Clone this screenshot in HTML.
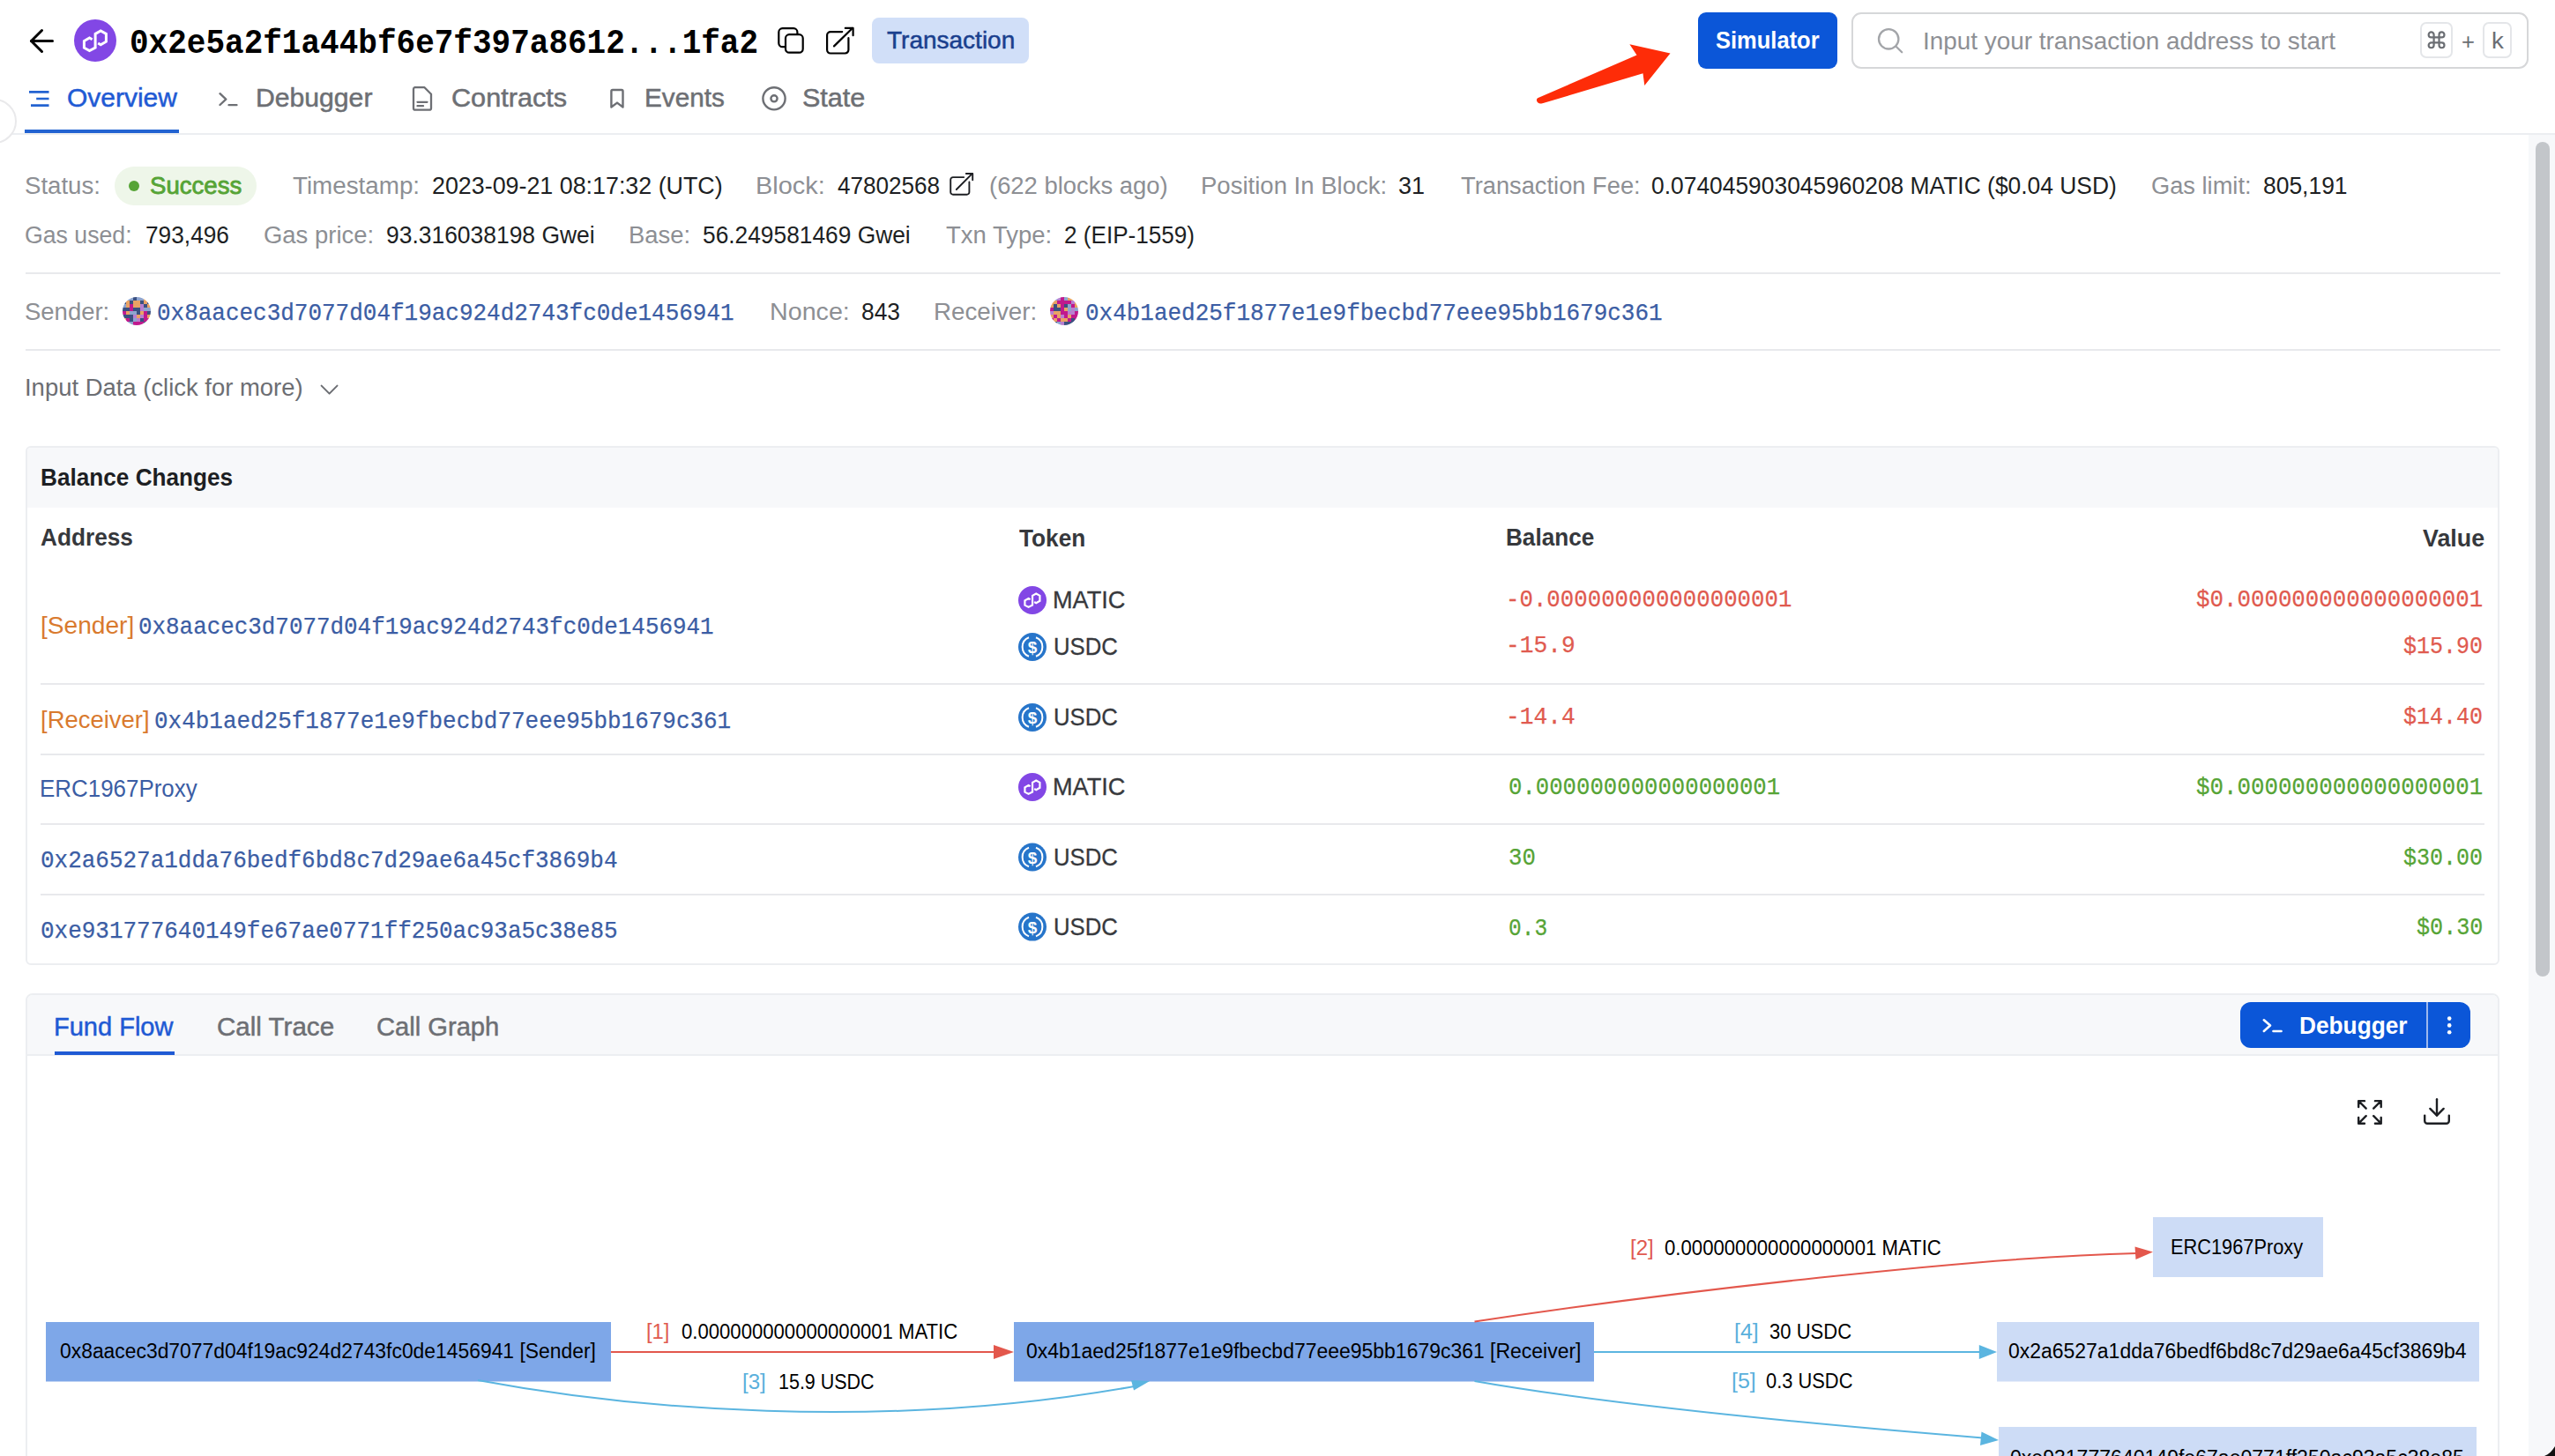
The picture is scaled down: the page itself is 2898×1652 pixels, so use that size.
<!DOCTYPE html>
<html><head><meta charset="utf-8"><title>Transaction</title>
<style>
html,body{margin:0;padding:0}
body{width:2898px;height:1652px;overflow:hidden;position:relative;background:#fff;font-family:"Liberation Sans",sans-serif}
.a{position:absolute;box-sizing:border-box}
.t{position:absolute;line-height:1;white-space:pre;transform-origin:0 0}
.dv{position:absolute;height:2px;background:#e8e9ec}
.av{position:absolute;width:32px;height:32px;border-radius:50%;overflow:hidden;display:grid;grid-template-columns:repeat(8,4px);grid-template-rows:repeat(8,4px)}
.av i{display:block;width:4px;height:4px}
.N{background:#3b5081}.L{background:#8ea4cf}.O{background:#e9a264}.M{background:#c0198d}.P{background:#b97fd0}
</style></head><body>
<!-- header divider -->
<div class="a" style="left:0;top:151px;width:2898px;height:2px;background:#eceef1"></div>
<!-- left floating circle -->
<div class="a" style="left:-32px;top:112px;width:51px;height:51px;border:2px solid #e9e9eb;border-radius:50%;background:#fff"></div>
<!-- tab underline -->
<div class="a" style="left:28px;top:147px;width:175px;height:4px;background:#2363d1"></div>
<!-- transaction badge -->
<div class="a" style="left:989px;top:20px;width:178px;height:52px;background:#d1dff8;border-radius:8px"></div>
<!-- simulator button -->
<div class="a" style="left:1926px;top:14px;width:158px;height:64px;background:#0b56d8;border-radius:9px"></div>
<!-- search box -->
<div class="a" style="left:2100px;top:14px;width:768px;height:64px;border:2px solid #d6d7d9;border-radius:11px;background:#fff"></div>
<div class="a" style="left:2745px;top:25px;width:37px;height:41px;border:2px solid #e4e6e9;border-radius:7px"></div>
<div class="a" style="left:2816px;top:25px;width:33px;height:41px;border:2px solid #e4e6e9;border-radius:7px"></div>
<!-- scrollbar -->
<div class="a" style="left:2868px;top:153px;width:30px;height:1499px;background:#f7f8fa"></div>
<div class="a" style="left:2876px;top:161px;width:16px;height:947px;background:#c3c6ca;border-radius:8px"></div>
<!-- success pill -->
<div class="a" style="left:130px;top:189px;width:161px;height:44px;background:#eef6e9;border-radius:22px"></div>
<div class="a" style="left:146px;top:205px;width:12px;height:12px;background:#56a436;border-radius:50%"></div>
<!-- dividers -->
<div class="dv" style="left:29px;top:309px;width:2807px"></div>
<div class="dv" style="left:29px;top:396px;width:2807px"></div>
<!-- avatars -->
<div class="av" style="left:139px;top:337px">
<i class="L"></i><i class="L"></i><i class="L"></i><i class="N"></i><i class="L"></i><i class="L"></i><i class="O"></i><i class="O"></i>
<i class="N"></i><i class="O"></i><i class="N"></i><i class="O"></i><i class="O"></i><i class="N"></i><i class="O"></i><i class="N"></i>
<i class="L"></i><i class="O"></i><i class="M"></i><i class="O"></i><i class="O"></i><i class="P"></i><i class="N"></i><i class="O"></i>
<i class="N"></i><i class="N"></i><i class="M"></i><i class="N"></i><i class="N"></i><i class="P"></i><i class="L"></i><i class="L"></i>
<i class="M"></i><i class="O"></i><i class="L"></i><i class="L"></i><i class="N"></i><i class="O"></i><i class="M"></i><i class="N"></i>
<i class="N"></i><i class="N"></i><i class="N"></i><i class="P"></i><i class="O"></i><i class="P"></i><i class="M"></i><i class="O"></i>
<i class="O"></i><i class="M"></i><i class="N"></i><i class="L"></i><i class="P"></i><i class="N"></i><i class="M"></i><i class="M"></i>
<i class="L"></i><i class="L"></i><i class="L"></i><i class="M"></i><i class="M"></i><i class="M"></i><i class="N"></i><i class="L"></i>
</div>
<div class="av" style="left:1191px;top:337px">
<i class="O"></i><i class="L"></i><i class="P"></i><i class="M"></i><i class="L"></i><i class="O"></i><i class="O"></i><i class="O"></i>
<i class="O"></i><i class="O"></i><i class="M"></i><i class="M"></i><i class="M"></i><i class="M"></i><i class="P"></i><i class="O"></i>
<i class="O"></i><i class="N"></i><i class="O"></i><i class="M"></i><i class="N"></i><i class="L"></i><i class="M"></i><i class="O"></i>
<i class="M"></i><i class="N"></i><i class="N"></i><i class="M"></i><i class="O"></i><i class="L"></i><i class="P"></i><i class="L"></i>
<i class="P"></i><i class="O"></i><i class="O"></i><i class="M"></i><i class="M"></i><i class="P"></i><i class="P"></i><i class="M"></i>
<i class="O"></i><i class="M"></i><i class="O"></i><i class="P"></i><i class="M"></i><i class="O"></i><i class="M"></i><i class="M"></i>
<i class="M"></i><i class="O"></i><i class="M"></i><i class="O"></i><i class="O"></i><i class="M"></i><i class="N"></i><i class="M"></i>
<i class="N"></i><i class="N"></i><i class="L"></i><i class="P"></i><i class="N"></i><i class="N"></i><i class="N"></i><i class="N"></i>
</div>
<!-- balance card -->
<div class="a" style="left:29px;top:506px;width:2806px;height:589px;border:2px solid #eceef1;border-radius:6px;overflow:hidden;background:#fff">
  <div class="a" style="left:0;top:0;width:100%;height:68px;background:#f7f8fa"></div>
</div>
<div class="dv" style="left:46px;top:775px;width:2772px"></div>
<div class="dv" style="left:46px;top:855px;width:2772px"></div>
<div class="dv" style="left:46px;top:934px;width:2772px"></div>
<div class="dv" style="left:46px;top:1014px;width:2772px"></div>
<!-- fund flow card -->
<div class="a" style="left:29px;top:1127px;width:2806px;height:700px;border:2px solid #eceef1;border-radius:8px;overflow:hidden;background:#fff">
  <div class="a" style="left:0;top:0;width:100%;height:69px;background:#f7f8fa;border-bottom:2px solid #eceef1"></div>
</div>
<div class="a" style="left:62px;top:1193px;width:136px;height:4px;background:#1f5ad4"></div>
<!-- debugger button -->
<div class="a" style="left:2541px;top:1137px;width:261px;height:52px;background:#0b56d8;border-radius:12px"></div>
<div class="a" style="left:2752px;top:1137px;width:2px;height:52px;background:#9db8ee"></div>

<svg class="a" style="left:0;top:0" width="2898" height="1652" viewBox="0 0 2898 1652">
<g fill="none" stroke-linecap="round" stroke-linejoin="round">
<!-- back arrow -->
<g transform="translate(26.93,25.93) scale(1.714)" stroke="#000" stroke-width="1.75"><path d="m12 19-7-7 7-7"/><path d="M19 12H5"/></g>
<!-- copy -->
<g stroke="#000" stroke-width="2.2"><rect x="883.3" y="32.2" width="21.1" height="20.9" rx="4.2"/><rect x="891" y="39.2" width="19.7" height="20.5" rx="4.2" fill="#fff"/></g>
<!-- external -->
<g stroke="#000" stroke-width="2.2"><path d="M955.2 36.1H942a3.9 3.9 0 0 0-3.9 3.9V56.6a3.9 3.9 0 0 0 3.9 3.9H958.5a3.9 3.9 0 0 0 3.9-3.9V43.2"/><path d="M946 52.4L966.8 32"/><path d="M958.8 31.9H967.6V40.2"/></g>
<!-- overview list icon -->
<g stroke="#2363d1" stroke-width="2.6" stroke-linecap="butt"><path d="M33 104.4H55.5M41.2 112H55.5M35 119.6H55.5"/></g>
<!-- debugger tab icon -->
<g stroke="#6d6f74" stroke-width="2.3"><path d="M249.5 106.2L256.3 112.6L249.5 119"/><path d="M259.5 119.2H268.5"/></g>
<!-- contracts doc -->
<g stroke="#6d6f74" stroke-width="2.3"><path d="M470.5 99.2H481.5L489 106.7V122.7a2 2 0 0 1-2 2H471a2 2 0 0 1-2-2V101a2 2 0 0 1 1.5-1.8Z"/><path d="M473.5 115.8H484.5M473.5 120.2H480"/></g>
<!-- events bookmark -->
<g stroke="#6d6f74" stroke-width="2.4"><path d="M693.4 103.5a1.5 1.5 0 0 1 1.5-1.5H705a1.5 1.5 0 0 1 1.5 1.5V121.5L700 116.6L693.4 121.5Z"/></g>
<!-- state -->
<g stroke="#6d6f74" stroke-width="2.4"><circle cx="878" cy="111.8" r="12.6"/><circle cx="878" cy="111.8" r="3.6"/></g>
<!-- red annotation arrow -->
<path d="M1894.5 60.4L1848.4 50.2L1856.5 62.5L1744.1 111.2C1742 112.5 1742.5 117.5 1748.3 117.5L1750.4 117.1L1863.5 83.3L1865.3 97.1Z" fill="#fe2c08" stroke="none"/>
<!-- search icon -->
<g stroke="#a3a5a9" stroke-width="2.3"><circle cx="2142.2" cy="44.3" r="11.2"/><path d="M2150.6 52.7L2157.2 59.2"/></g>
<!-- command glyph -->
<g transform="translate(2751.7,33.5) scale(0.989)" stroke="#6b6e73" stroke-width="2.22"><path d="M15 6v12a3 3 0 1 0 3-3H6a3 3 0 1 0 3 3V6a3 3 0 1 0-3 3h12a3 3 0 1 0-3-3"/></g>
<!-- chevron -->
<path d="M364.6 437.6L373.6 446.6L382.5 437.6" stroke="#6c6e73" stroke-width="2"/>
<!-- block external -->
<g stroke="#1d1f23" stroke-width="1.9"><path d="M1093.2 201.1H1081a2.8 2.8 0 0 0-2.8 2.8V217.9a2.8 2.8 0 0 0 2.8 2.8H1096.6a2.8 2.8 0 0 0 2.8-2.8V206.4"/><path d="M1084.8 215L1102.6 197.2"/><path d="M1095.8 197H1103.2V204.2"/></g>
<!-- expand -->
<g transform="translate(2670.9,1244.9) scale(1.42)" stroke="#1d1f23" stroke-width="1.69"><path d="m21 21-6-6m6 6v-4.8m0 4.8h-4.8"/><path d="M3 16.2V21m0 0h4.8M3 21l6-6"/><path d="M21 7.8V3m0 0h-4.8M21 3l-6 6"/><path d="M3 7.8V3m0 0h4.8M3 3l6 6"/></g>
<!-- download -->
<g transform="translate(2745.6,1242.6) scale(1.533)" stroke="#1d1f23" stroke-width="1.566"><path d="M21 15v4a2 2 0 0 1-2 2H5a2 2 0 0 1-2-2v-4"/><polyline points="7 10 12 15 17 10"/><line x1="12" x2="12" y1="15" y2="3"/></g>
<!-- debugger button icon -->
<g stroke="#fff" stroke-width="2.6"><path d="M2567.8 1157.3L2575 1163.6L2567.8 1169.9"/><path d="M2578.5 1170H2587.5"/></g>
</g>
<g fill="#fff"><circle cx="2778.2" cy="1155.6" r="2.3"/><circle cx="2778.2" cy="1163.4" r="2.3"/><circle cx="2778.2" cy="1171.2" r="2.3"/></g>
<!-- polygon logo header -->
<circle cx="108" cy="46" r="24" fill="#8247e5"/>
<polyline transform="translate(108,46)" points="-3.4,-1.3 -6.5,-3 -12.6,0.5 -12.6,8.2 -6.5,11.6 0.1,8.2 0.1,-7.6 6.2,-11.1 12.4,-7.6 12.4,1.2 6.2,4.7 3.2,3" fill="none" stroke="#fff" stroke-width="3" stroke-linejoin="miter" stroke-linecap="butt"/>
<!-- token icons -->
<g>
<circle cx="1171" cy="681" r="16" fill="#8247e5"/>
<polyline transform="translate(1171,681) scale(0.68)" points="-3.4,-1.3 -6.5,-3 -12.6,0.5 -12.6,8.2 -6.5,11.6 0.1,8.2 0.1,-7.6 6.2,-11.1 12.4,-7.6 12.4,1.2 6.2,4.7 3.2,3" fill="none" stroke="#fff" stroke-width="3.2" stroke-linejoin="miter" stroke-linecap="butt"/>
</g>
<g transform="translate(0,212)">
<circle cx="1171" cy="681" r="16" fill="#8247e5"/>
<polyline transform="translate(1171,681) scale(0.68)" points="-3.4,-1.3 -6.5,-3 -12.6,0.5 -12.6,8.2 -6.5,11.6 0.1,8.2 0.1,-7.6 6.2,-11.1 12.4,-7.6 12.4,1.2 6.2,4.7 3.2,3" fill="none" stroke="#fff" stroke-width="3.2" stroke-linejoin="miter" stroke-linecap="butt"/>
</g>
<g>
<circle cx="1171" cy="734" r="16" fill="#2775ca"/>
<path d="M1167 723.2A11.6 11.6 0 0 0 1167 744.8M1175 723.2A11.6 11.6 0 0 1 1175 744.8" stroke="#fff" stroke-width="2" fill="none"/>
<text x="1171" y="741" text-anchor="middle" font-family="Liberation Sans" font-weight="700" font-size="19" fill="#fff">$</text>
</g>
<g transform="translate(0,80)">
<circle cx="1171" cy="734" r="16" fill="#2775ca"/>
<path d="M1167 723.2A11.6 11.6 0 0 0 1167 744.8M1175 723.2A11.6 11.6 0 0 1 1175 744.8" stroke="#fff" stroke-width="2" fill="none"/>
<text x="1171" y="741" text-anchor="middle" font-family="Liberation Sans" font-weight="700" font-size="19" fill="#fff">$</text>
</g>
<g transform="translate(0,238.5)">
<circle cx="1171" cy="734" r="16" fill="#2775ca"/>
<path d="M1167 723.2A11.6 11.6 0 0 0 1167 744.8M1175 723.2A11.6 11.6 0 0 1 1175 744.8" stroke="#fff" stroke-width="2" fill="none"/>
<text x="1171" y="741" text-anchor="middle" font-family="Liberation Sans" font-weight="700" font-size="19" fill="#fff">$</text>
</g>
<g transform="translate(0,317.6)">
<circle cx="1171" cy="734" r="16" fill="#2775ca"/>
<path d="M1167 723.2A11.6 11.6 0 0 0 1167 744.8M1175 723.2A11.6 11.6 0 0 1 1175 744.8" stroke="#fff" stroke-width="2" fill="none"/>
<text x="1171" y="741" text-anchor="middle" font-family="Liberation Sans" font-weight="700" font-size="19" fill="#fff">$</text>
</g>
<!-- graph nodes -->
<rect x="52" y="1500" width="641" height="67.5" fill="#7ea7e8"/>
<rect x="1150" y="1500" width="658" height="67.5" fill="#7ea7e8"/>
<rect x="2442" y="1381" width="193" height="68" fill="#cddcf6"/>
<rect x="2265" y="1500" width="547" height="67.5" fill="#cddcf6"/>
<rect x="2267" y="1619" width="542" height="60" fill="#cddcf6"/>
<!-- edges -->
<g fill="none" stroke-width="2">
<path d="M693 1534H1128" stroke="#e3574c"/>
<path d="M1672.5 1499.6C1891.8 1466.2 2242.8 1426.1 2423 1421.9" stroke="#e3574c"/>
<path d="M542 1566C708.6 1597.3 999.2 1625.6 1292 1572" stroke="#5bb5e0"/>
<path d="M1808 1534H2246" stroke="#5bb5e0"/>
<path d="M1672.5 1567C1829.1 1594.5 2074.1 1617.4 2249 1631.5" stroke="#5bb5e0"/>
</g>
<g stroke="none">
<path d="M1127 1526L1150 1534L1127 1542Z" fill="#e3574c"/>
<path d="M2421.5 1414.5L2442 1420.4L2422.5 1429Z" fill="#e3574c"/>
<path d="M1283 1566L1304 1567L1286 1577.5Z" fill="#5bb5e0"/>
<path d="M2244.8 1526L2265 1534L2244.8 1542Z" fill="#5bb5e0"/>
<path d="M2247.5 1624.5L2267 1634L2246 1640Z" fill="#5bb5e0"/>
</g>
<!-- window corner -->
<path d="M2898 1641C2895 1646 2891 1650 2886 1652H2898Z" fill="#111"/>

</svg>
<div class="t" style="left:147.15px;top:30.60px;color:#000;font-family:'Liberation Mono', monospace;font-size:39px;font-weight:700;transform:scaleX(0.9233)">0x2e5a2f1a44bf6e7f397a8612...1fa2</div>
<div class="t" style="left:1006.00px;top:31.92px;color:#1a3f8e;font-family:'Liberation Sans', sans-serif;font-size:28px;font-weight:400;-webkit-text-stroke:0.5px currentColor;transform:scaleX(1.0000)">Transaction</div>
<div class="t" style="left:75.97px;top:96.66px;color:#1f5ad4;font-family:'Liberation Sans', sans-serif;font-size:29px;font-weight:400;-webkit-text-stroke:0.5px currentColor;transform:scaleX(1.0331)">Overview</div>
<div class="t" style="left:289.92px;top:96.66px;color:#6d6f74;font-family:'Liberation Sans', sans-serif;font-size:29px;font-weight:400;-webkit-text-stroke:0.5px currentColor;transform:scaleX(1.0397)">Debugger</div>
<div class="t" style="left:511.74px;top:96.66px;color:#6d6f74;font-family:'Liberation Sans', sans-serif;font-size:29px;font-weight:400;-webkit-text-stroke:0.5px currentColor;transform:scaleX(1.0561)">Contracts</div>
<div class="t" style="left:730.95px;top:96.66px;color:#6d6f74;font-family:'Liberation Sans', sans-serif;font-size:29px;font-weight:400;-webkit-text-stroke:0.5px currentColor;transform:scaleX(1.0233)">Events</div>
<div class="t" style="left:909.75px;top:96.66px;color:#6d6f74;font-family:'Liberation Sans', sans-serif;font-size:29px;font-weight:400;-webkit-text-stroke:0.5px currentColor;transform:scaleX(1.0530)">State</div>
<div class="t" style="left:1946.09px;top:32.02px;color:#fff;font-family:'Liberation Sans', sans-serif;font-size:28px;font-weight:700;transform:scaleX(0.9109)">Simulator</div>
<div class="t" style="left:2181.41px;top:32.52px;color:#8e9095;font-family:'Liberation Sans', sans-serif;font-size:28px;font-weight:400;transform:scaleX(0.9959)">Input your transaction address to start</div>
<div class="t" style="left:2791.82px;top:33.84px;color:#6b6e73;font-family:'Liberation Sans', sans-serif;font-size:26px;font-weight:400;transform:scaleX(0.9846)">+</div>
<div class="t" style="left:2825.73px;top:32.84px;color:#6b6e73;font-family:'Liberation Sans', sans-serif;font-size:26px;font-weight:400;transform:scaleX(1.0667)">k</div>
<div class="t" style="left:28.38px;top:197.68px;color:#8d8f94;font-family:'Liberation Sans', sans-serif;font-size:27px;font-weight:400;transform:scaleX(1.0222)">Status:</div>
<div class="t" style="left:169.98px;top:197.68px;color:#56a436;font-family:'Liberation Sans', sans-serif;font-size:27px;font-weight:400;-webkit-text-stroke:0.8px currentColor;transform:scaleX(1.0218)">Success</div>
<div class="t" style="left:332.00px;top:197.68px;color:#8d8f94;font-family:'Liberation Sans', sans-serif;font-size:27px;font-weight:400;transform:scaleX(1.0290)">Timestamp:</div>
<div class="t" style="left:490.01px;top:197.68px;color:#1d1f23;font-family:'Liberation Sans', sans-serif;font-size:27px;font-weight:400;transform:scaleX(0.9939)">2023-09-21 08:17:32 (UTC)</div>
<div class="t" style="left:856.86px;top:197.68px;color:#8d8f94;font-family:'Liberation Sans', sans-serif;font-size:27px;font-weight:400;transform:scaleX(1.0725)">Block:</div>
<div class="t" style="left:950.00px;top:197.68px;color:#1d1f23;font-family:'Liberation Sans', sans-serif;font-size:27px;font-weight:400;transform:scaleX(0.9664)">47802568</div>
<div class="t" style="left:1121.98px;top:197.68px;color:#8d8f94;font-family:'Liberation Sans', sans-serif;font-size:27px;font-weight:400;transform:scaleX(1.0152)">(622 blocks ago)</div>
<div class="t" style="left:1361.96px;top:197.68px;color:#8d8f94;font-family:'Liberation Sans', sans-serif;font-size:27px;font-weight:400;transform:scaleX(1.0197)">Position In Block:</div>
<div class="t" style="left:1586.00px;top:197.68px;color:#1d1f23;font-family:'Liberation Sans', sans-serif;font-size:27px;font-weight:400;transform:scaleX(1.0000)">31</div>
<div class="t" style="left:1657.00px;top:197.68px;color:#8d8f94;font-family:'Liberation Sans', sans-serif;font-size:27px;font-weight:400;transform:scaleX(1.0101)">Transaction Fee:</div>
<div class="t" style="left:1873.02px;top:197.68px;color:#1d1f23;font-family:'Liberation Sans', sans-serif;font-size:27px;font-weight:400;transform:scaleX(0.9777)">0.074045903045960208 MATIC ($0.04 USD)</div>
<div class="t" style="left:2439.99px;top:197.68px;color:#8d8f94;font-family:'Liberation Sans', sans-serif;font-size:27px;font-weight:400;transform:scaleX(1.0092)">Gas limit:</div>
<div class="t" style="left:2567.02px;top:197.68px;color:#1d1f23;font-family:'Liberation Sans', sans-serif;font-size:27px;font-weight:400;transform:scaleX(0.9792)">805,191</div>
<div class="t" style="left:28.41px;top:253.68px;color:#8d8f94;font-family:'Liberation Sans', sans-serif;font-size:27px;font-weight:400;transform:scaleX(0.9883)">Gas used:</div>
<div class="t" style="left:164.63px;top:253.68px;color:#1d1f23;font-family:'Liberation Sans', sans-serif;font-size:27px;font-weight:400;transform:scaleX(0.9729)">793,496</div>
<div class="t" style="left:298.98px;top:253.68px;color:#8d8f94;font-family:'Liberation Sans', sans-serif;font-size:27px;font-weight:400;transform:scaleX(1.0167)">Gas price:</div>
<div class="t" style="left:438.02px;top:253.68px;color:#1d1f23;font-family:'Liberation Sans', sans-serif;font-size:27px;font-weight:400;transform:scaleX(0.9791)">93.316038198 Gwei</div>
<div class="t" style="left:712.97px;top:253.68px;color:#8d8f94;font-family:'Liberation Sans', sans-serif;font-size:27px;font-weight:400;transform:scaleX(1.0154)">Base:</div>
<div class="t" style="left:797.03px;top:253.68px;color:#1d1f23;font-family:'Liberation Sans', sans-serif;font-size:27px;font-weight:400;transform:scaleX(0.9749)">56.249581469 Gwei</div>
<div class="t" style="left:1073.00px;top:253.68px;color:#8d8f94;font-family:'Liberation Sans', sans-serif;font-size:27px;font-weight:400;transform:scaleX(1.0172)">Txn Type:</div>
<div class="t" style="left:1207.03px;top:253.68px;color:#1d1f23;font-family:'Liberation Sans', sans-serif;font-size:27px;font-weight:400;transform:scaleX(0.9669)">2 (EIP-1559)</div>
<div class="t" style="left:28.38px;top:340.68px;color:#8d8f94;font-family:'Liberation Sans', sans-serif;font-size:27px;font-weight:400;transform:scaleX(1.0176)">Sender:</div>
<div class="t" style="left:178.07px;top:342.00px;color:#3b5da4;font-family:'Liberation Mono', monospace;font-size:28px;font-weight:400;-webkit-text-stroke:0.25px currentColor;transform:scaleX(0.9276)">0x8aacec3d7077d04f19ac924d2743fc0de1456941</div>
<div class="t" style="left:872.88px;top:340.68px;color:#8d8f94;font-family:'Liberation Sans', sans-serif;font-size:27px;font-weight:400;transform:scaleX(1.0617)">Nonce:</div>
<div class="t" style="left:977.02px;top:340.68px;color:#1d1f23;font-family:'Liberation Sans', sans-serif;font-size:27px;font-weight:400;transform:scaleX(0.9767)">843</div>
<div class="t" style="left:1058.95px;top:340.68px;color:#8d8f94;font-family:'Liberation Sans', sans-serif;font-size:27px;font-weight:400;transform:scaleX(1.0273)">Receiver:</div>
<div class="t" style="left:1231.07px;top:342.00px;color:#3b5da4;font-family:'Liberation Mono', monospace;font-size:28px;font-weight:400;-webkit-text-stroke:0.25px currentColor;transform:scaleX(0.9276)">0x4b1aed25f1877e1e9fbecbd77eee95bb1679c361</div>
<div class="t" style="left:27.67px;top:426.68px;color:#6c6e73;font-family:'Liberation Sans', sans-serif;font-size:27px;font-weight:400;transform:scaleX(1.0163)">Input Data (click for more)</div>
<div class="t" style="left:45.90px;top:528.40px;color:#1d1f23;font-family:'Liberation Sans', sans-serif;font-size:27.5px;font-weight:700;transform:scaleX(0.9515)">Balance Changes</div>
<div class="t" style="left:46.06px;top:595.52px;color:#36383c;font-family:'Liberation Sans', sans-serif;font-size:28px;font-weight:700;transform:scaleX(0.9364)">Address</div>
<div class="t" style="left:1156.00px;top:596.52px;color:#36383c;font-family:'Liberation Sans', sans-serif;font-size:28px;font-weight:700;transform:scaleX(0.9367)">Token</div>
<div class="t" style="left:1708.13px;top:595.52px;color:#36383c;font-family:'Liberation Sans', sans-serif;font-size:28px;font-weight:700;transform:scaleX(0.9333)">Balance</div>
<div class="t" style="left:2748.00px;top:596.52px;color:#36383c;font-family:'Liberation Sans', sans-serif;font-size:28px;font-weight:700;transform:scaleX(0.9583)">Value</div>
<div class="t" style="left:46.42px;top:696.68px;color:#d97a2e;font-family:'Liberation Sans', sans-serif;font-size:27px;font-weight:400;transform:scaleX(1.0408)">[Sender]</div>
<div class="t" style="left:157.08px;top:698.40px;color:#3b5da4;font-family:'Liberation Mono', monospace;font-size:28px;font-weight:400;-webkit-text-stroke:0.25px currentColor;transform:scaleX(0.9247)">0x8aacec3d7077d04f19ac924d2743fc0de1456941</div>
<div class="t" style="left:1194.46px;top:667.22px;color:#37393d;font-family:'Liberation Sans', sans-serif;font-size:28px;font-weight:400;-webkit-text-stroke:0.3px currentColor;transform:scaleX(0.9683)">MATIC</div>
<div class="t" style="left:1194.66px;top:720.12px;color:#37393d;font-family:'Liberation Sans', sans-serif;font-size:28px;font-weight:400;-webkit-text-stroke:0.3px currentColor;transform:scaleX(0.9182)">USDC</div>
<div class="t" style="left:1707.92px;top:667.20px;color:#e05a4f;font-family:'Liberation Mono', monospace;font-size:28px;font-weight:400;-webkit-text-stroke:0.25px currentColor;transform:scaleX(0.9193)">-0.000000000000000001</div>
<div class="t" style="left:1707.85px;top:719.20px;color:#e05a4f;font-family:'Liberation Mono', monospace;font-size:28px;font-weight:400;-webkit-text-stroke:0.25px currentColor;transform:scaleX(0.9367)">-15.9</div>
<div class="t" style="left:2490.88px;top:667.20px;color:#e05a4f;font-family:'Liberation Mono', monospace;font-size:28px;font-weight:400;-webkit-text-stroke:0.25px currentColor;transform:scaleX(0.9214)">$0.000000000000000001</div>
<div class="t" style="left:2725.71px;top:720.40px;color:#e05a4f;font-family:'Liberation Mono', monospace;font-size:28px;font-weight:400;-webkit-text-stroke:0.25px currentColor;transform:scaleX(0.8929)">$15.90</div>
<div class="t" style="left:46.47px;top:803.68px;color:#d97a2e;font-family:'Liberation Sans', sans-serif;font-size:27px;font-weight:400;transform:scaleX(1.0169)">[Receiver]</div>
<div class="t" style="left:174.97px;top:805.00px;color:#3b5da4;font-family:'Liberation Mono', monospace;font-size:28px;font-weight:400;-webkit-text-stroke:0.25px currentColor;transform:scaleX(0.9270)">0x4b1aed25f1877e1e9fbecbd77eee95bb1679c361</div>
<div class="t" style="left:1194.66px;top:800.12px;color:#37393d;font-family:'Liberation Sans', sans-serif;font-size:28px;font-weight:400;-webkit-text-stroke:0.3px currentColor;transform:scaleX(0.9182)">USDC</div>
<div class="t" style="left:1707.85px;top:800.00px;color:#e05a4f;font-family:'Liberation Mono', monospace;font-size:28px;font-weight:400;-webkit-text-stroke:0.25px currentColor;transform:scaleX(0.9367)">-14.4</div>
<div class="t" style="left:2725.71px;top:800.10px;color:#e05a4f;font-family:'Liberation Mono', monospace;font-size:28px;font-weight:400;-webkit-text-stroke:0.25px currentColor;transform:scaleX(0.8929)">$14.40</div>
<div class="t" style="left:45.08px;top:881.68px;color:#3b5da4;font-family:'Liberation Sans', sans-serif;font-size:27px;font-weight:400;transform:scaleX(0.9603)">ERC1967Proxy</div>
<div class="t" style="left:1194.46px;top:879.22px;color:#37393d;font-family:'Liberation Sans', sans-serif;font-size:28px;font-weight:400;-webkit-text-stroke:0.3px currentColor;transform:scaleX(0.9683)">MATIC</div>
<div class="t" style="left:1710.68px;top:880.20px;color:#56a436;font-family:'Liberation Mono', monospace;font-size:28px;font-weight:400;-webkit-text-stroke:0.25px currentColor;transform:scaleX(0.9168)">0.000000000000000001</div>
<div class="t" style="left:2490.88px;top:879.90px;color:#56a436;font-family:'Liberation Mono', monospace;font-size:28px;font-weight:400;-webkit-text-stroke:0.25px currentColor;transform:scaleX(0.9214)">$0.000000000000000001</div>
<div class="t" style="left:46.07px;top:962.50px;color:#3b5da4;font-family:'Liberation Mono', monospace;font-size:28px;font-weight:400;-webkit-text-stroke:0.25px currentColor;transform:scaleX(0.9274)">0x2a6527a1dda76bedf6bd8c7d29ae6a45cf3869b4</div>
<div class="t" style="left:1194.66px;top:958.72px;color:#37393d;font-family:'Liberation Sans', sans-serif;font-size:28px;font-weight:400;-webkit-text-stroke:0.3px currentColor;transform:scaleX(0.9182)">USDC</div>
<div class="t" style="left:1710.68px;top:959.60px;color:#56a436;font-family:'Liberation Mono', monospace;font-size:28px;font-weight:400;-webkit-text-stroke:0.25px currentColor;transform:scaleX(0.9161)">30</div>
<div class="t" style="left:2725.71px;top:959.60px;color:#56a436;font-family:'Liberation Mono', monospace;font-size:28px;font-weight:400;-webkit-text-stroke:0.25px currentColor;transform:scaleX(0.8929)">$30.00</div>
<div class="t" style="left:46.07px;top:1043.30px;color:#3b5da4;font-family:'Liberation Mono', monospace;font-size:28px;font-weight:400;-webkit-text-stroke:0.25px currentColor;transform:scaleX(0.9276)">0xe931777640149fe67ae0771ff250ac93a5c38e85</div>
<div class="t" style="left:1194.66px;top:1038.12px;color:#37393d;font-family:'Liberation Sans', sans-serif;font-size:28px;font-weight:400;-webkit-text-stroke:0.3px currentColor;transform:scaleX(0.9182)">USDC</div>
<div class="t" style="left:1710.72px;top:1039.80px;color:#56a436;font-family:'Liberation Mono', monospace;font-size:28px;font-weight:400;-webkit-text-stroke:0.25px currentColor;transform:scaleX(0.8750)">0.3</div>
<div class="t" style="left:2740.50px;top:1039.40px;color:#56a436;font-family:'Liberation Mono', monospace;font-size:28px;font-weight:400;-webkit-text-stroke:0.25px currentColor;transform:scaleX(0.8976)">$0.30</div>
<div class="t" style="left:61.33px;top:1149.98px;color:#1f5ad4;font-family:'Liberation Sans', sans-serif;font-size:29.5px;font-weight:400;-webkit-text-stroke:0.5px currentColor;transform:scaleX(0.9831)">Fund Flow</div>
<div class="t" style="left:246.00px;top:1149.98px;color:#6d6f74;font-family:'Liberation Sans', sans-serif;font-size:29.5px;font-weight:400;-webkit-text-stroke:0.5px currentColor;transform:scaleX(1.0023)">Call Trace</div>
<div class="t" style="left:427.31px;top:1149.98px;color:#6d6f74;font-family:'Liberation Sans', sans-serif;font-size:29.5px;font-weight:400;-webkit-text-stroke:0.5px currentColor;transform:scaleX(0.9878)">Call Graph</div>
<div class="t" style="left:2608.12px;top:1149.52px;color:#fff;font-family:'Liberation Sans', sans-serif;font-size:28px;font-weight:700;transform:scaleX(0.9380)">Debugger</div>
<div class="t" style="left:68.41px;top:1522.32px;color:#000;font-family:'Liberation Sans', sans-serif;font-size:23px;font-weight:400;transform:scaleX(0.9944)">0x8aacec3d7077d04f19ac924d2743fc0de1456941 [Sender]</div>
<div class="t" style="left:1164.00px;top:1522.32px;color:#000;font-family:'Liberation Sans', sans-serif;font-size:23px;font-weight:400;transform:scaleX(0.9984)">0x4b1aed25f1877e1e9fbecbd77eee95bb1679c361 [Receiver]</div>
<div class="t" style="left:2462.31px;top:1404.22px;color:#000;font-family:'Liberation Sans', sans-serif;font-size:23px;font-weight:400;transform:scaleX(0.9465)">ERC1967Proxy</div>
<div class="t" style="left:2278.00px;top:1522.32px;color:#000;font-family:'Liberation Sans', sans-serif;font-size:23px;font-weight:400;transform:scaleX(0.9981)">0x2a6527a1dda76bedf6bd8c7d29ae6a45cf3869b4</div>
<div class="t" style="left:2280.00px;top:1643.32px;color:#000;font-family:'Liberation Sans', sans-serif;font-size:23px;font-weight:400;transform:scaleX(1.0020)">0xe931777640149fe67ae0771ff250ac93a5c38e85</div>
<div class="t" style="left:733.07px;top:1499.92px;color:#e05a4f;font-family:'Liberation Sans', sans-serif;font-size:23px;font-weight:400;transform:scaleX(1.0348)">[1]</div>
<div class="t" style="left:772.54px;top:1499.92px;color:#000;font-family:'Liberation Sans', sans-serif;font-size:23px;font-weight:400;transform:scaleX(0.9617)">0.000000000000000001 MATIC</div>
<div class="t" style="left:842.05px;top:1556.92px;color:#5ab0dc;font-family:'Liberation Sans', sans-serif;font-size:23px;font-weight:400;transform:scaleX(1.0478)">[3]</div>
<div class="t" style="left:882.67px;top:1556.92px;color:#000;font-family:'Liberation Sans', sans-serif;font-size:23px;font-weight:400;transform:scaleX(0.9339)">15.9 USDC</div>
<div class="t" style="left:1848.55px;top:1405.22px;color:#e05a4f;font-family:'Liberation Sans', sans-serif;font-size:23px;font-weight:400;transform:scaleX(1.0478)">[2]</div>
<div class="t" style="left:1887.84px;top:1405.22px;color:#000;font-family:'Liberation Sans', sans-serif;font-size:23px;font-weight:400;transform:scaleX(0.9636)">0.000000000000000001 MATIC</div>
<div class="t" style="left:1966.91px;top:1500.32px;color:#5ab0dc;font-family:'Liberation Sans', sans-serif;font-size:23px;font-weight:400;transform:scaleX(1.0870)">[4]</div>
<div class="t" style="left:2007.04px;top:1500.32px;color:#000;font-family:'Liberation Sans', sans-serif;font-size:23px;font-weight:400;transform:scaleX(0.9579)">30 USDC</div>
<div class="t" style="left:1963.91px;top:1556.32px;color:#5ab0dc;font-family:'Liberation Sans', sans-serif;font-size:23px;font-weight:400;transform:scaleX(1.0870)">[5]</div>
<div class="t" style="left:2003.05px;top:1556.32px;color:#000;font-family:'Liberation Sans', sans-serif;font-size:23px;font-weight:400;transform:scaleX(0.9510)">0.3 USDC</div>
</body></html>
